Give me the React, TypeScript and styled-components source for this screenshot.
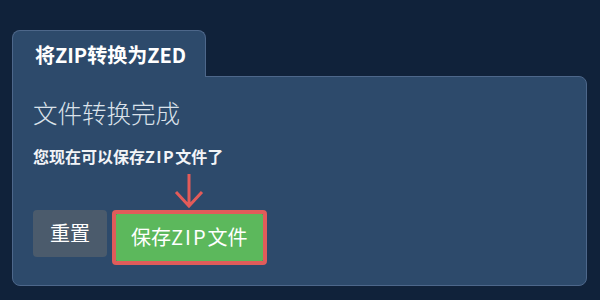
import React from "react";
import styled, { createGlobalStyle } from "styled-components";

const GlobalStyle = createGlobalStyle`
  html, body {
    margin: 0;
    padding: 0;
    background-color: #10223a;
    font-family: "Noto Sans CJK SC", "Noto Sans", sans-serif;
  }
`;

const App: React.FC = () => {
  return (
    <Page>
      <GlobalStyle />
      <Tabs>
        <Tab>将ZIP转换为ZED</Tab>
        <Filler />
      </Tabs>
      <Panel>
        <Heading>文件转换完成</Heading>
        <Message>
          您现在可以保存<Latin $spacing={1.5}>ZIP</Latin>文件了
        </Message>
        <Actions>
          <ResetButton>重置</ResetButton>
          <Highlight>
            <Arrow width="30" height="36" viewBox="0 0 30 36">
              <path
                d="M15 1 V33 M2 19 L15 33 L28 19"
                fill="none"
                stroke="#e35b59"
                strokeWidth="3"
              />
            </Arrow>
            <SaveButton>
              保存<Latin $spacing={2}>ZIP</Latin>文件
            </SaveButton>
          </Highlight>
        </Actions>
      </Panel>
    </Page>
  );
};

export default App;

const Page = styled.div`
  width: 600px;
  height: 300px;
  box-sizing: border-box;
  padding: 30px 13px 14px 12px;
  display: flex;
  flex-direction: column;
`;

const Tabs = styled.div`
  display: flex;
  height: 46px;
`;

const Tab = styled.div`
  width: 194px;
  box-sizing: border-box;
  padding: 12px 0 0 22px;
  background-color: #2d4a6b;
  border: 1px solid #4d678a;
  border-bottom: none;
  border-radius: 8px 8px 0 0;
  color: #ffffff;
  font-size: 20px;
  font-weight: 700;
  line-height: 1.2;
  white-space: nowrap;
  position: relative;
  z-index: 1;
  margin-bottom: -1px;
`;

const Filler = styled.div`
  flex: 1;
`;

const Panel = styled.div`
  flex: 1;
  box-sizing: border-box;
  background-color: #2d4a6b;
  border: 1px solid #4d678a;
  border-radius: 0 8px 8px 8px;
  padding: 21px 20px 0 20px;
  display: flex;
  flex-direction: column;
`;

const Heading = styled.div`
  color: #dbe2ea;
  font-size: 24.5px;
  font-weight: 300;
  line-height: 1.2;
`;

const Message = styled.div`
  margin-top: 20px;
  color: #f2f4f7;
  font-size: 16px;
  font-weight: 700;
  line-height: 1.2;
`;

const Latin = styled.span<{ $spacing: number }>`
  letter-spacing: ${(p) => p.$spacing}px;
`;

const Actions = styled.div`
  margin-top: 43px;
  display: flex;
  align-items: flex-start;
  gap: 5px;
`;

const ResetButton = styled.button`
  height: 47px;
  padding: 0 17px;
  border: none;
  border-radius: 4px;
  background-color: #4b5b6c;
  color: #ffffff;
  font-family: inherit;
  font-size: 20px;
  line-height: 1;
`;

const Highlight = styled.div`
  position: relative;
  border: 4px solid #e05c5a;
  border-radius: 4px;
  display: flex;
`;

const Arrow = styled.svg`
  position: absolute;
  left: 50%;
  top: -41px;
  transform: translateX(-50%);
`;

const SaveButton = styled.button`
  height: 47px;
  padding: 0 15px;
  border: none;
  border-radius: 1px;
  background-color: #5cb85c;
  color: #ffffff;
  font-family: inherit;
  font-size: 20px;
  line-height: 1;
  white-space: nowrap;
`;
